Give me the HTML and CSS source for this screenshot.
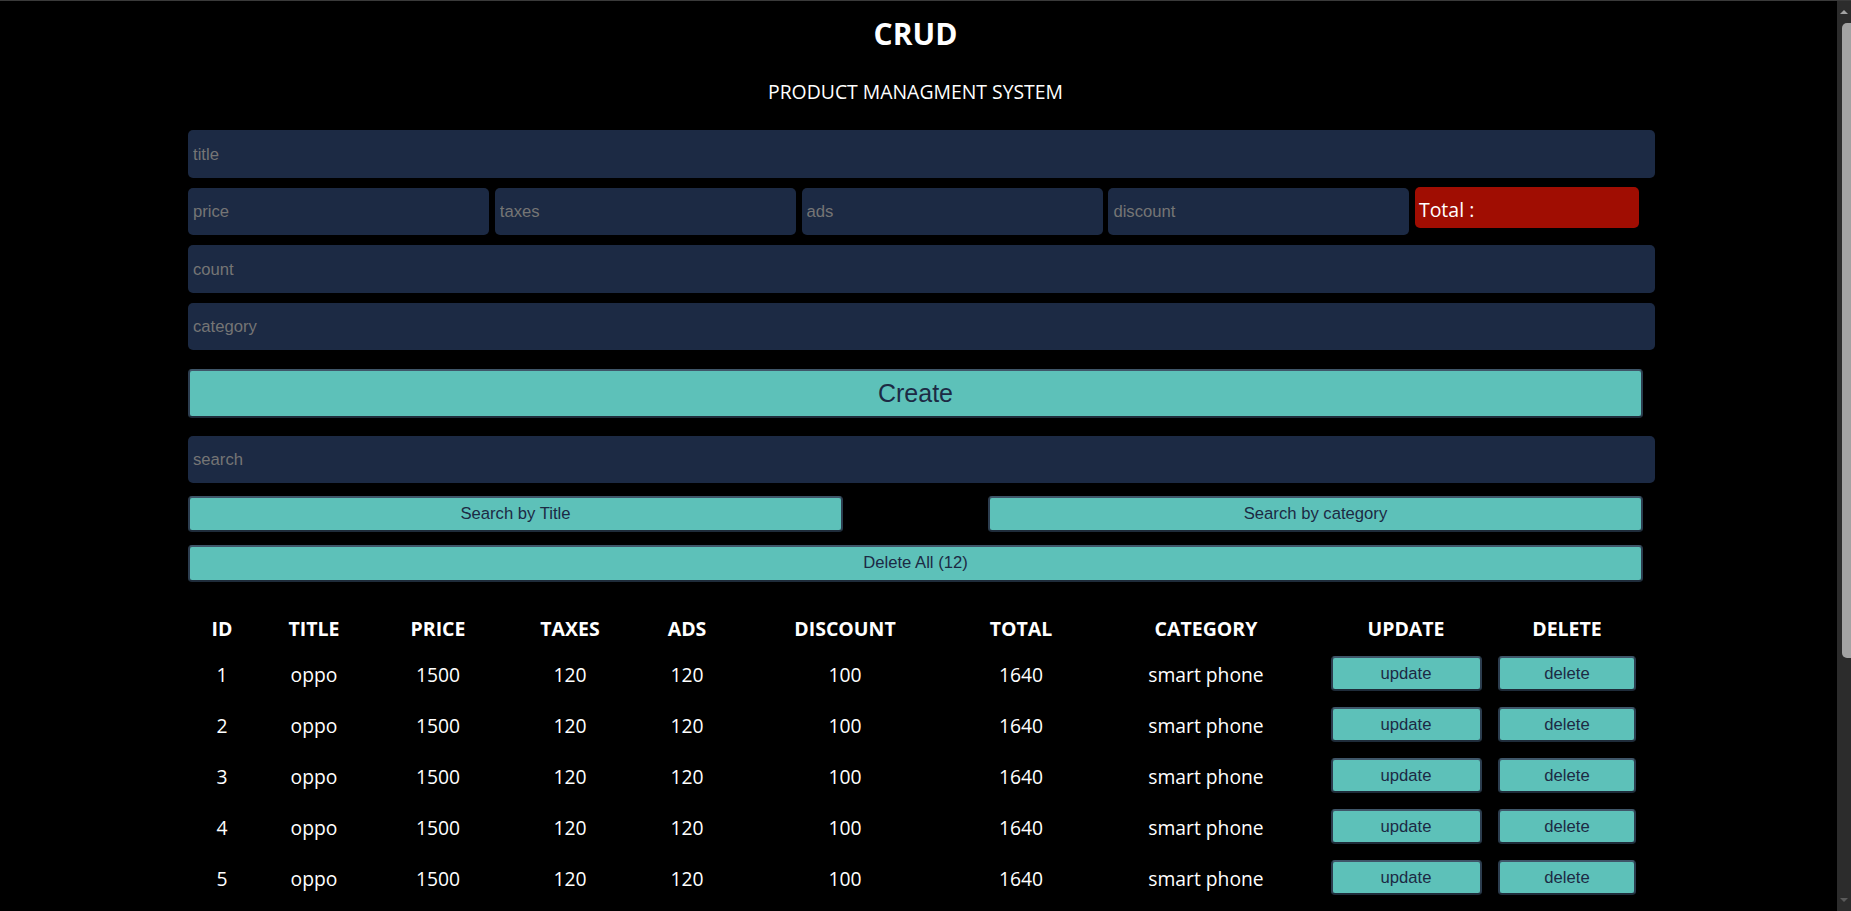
FILE: index.html
```html
<!DOCTYPE html>
<html lang="en">
<head>
<meta charset="UTF-8">
<title>CRUD</title>
<link rel="stylesheet" href="styles.css">
</head>
<body>
<div class="crud">
  <div class="head">
    <h2 class="brand">CRUD</h2>
    <p class="subtitle">PRODUCT MANAGMENT SYSTEM</p>
  </div>
  <div class="inputs">
    <input class="field" type="text" placeholder="title">
    <div class="price">
      <input class="field small" type="text" placeholder="price">
      <input class="field small" type="text" placeholder="taxes">
      <input class="field small" type="text" placeholder="ads">
      <input class="field small" type="text" placeholder="discount">
      <small class="total">Total :</small>
    </div>
    <input class="field" type="text" placeholder="count">
    <input class="field" type="text" placeholder="category">
    <button class="btn create">Create</button>
  </div>
  <div class="search-block">
    <input class="field" type="text" placeholder="search">
    <div class="search-btns">
      <button class="btn half">Search by Title</button>
      <button class="btn half">Search by category</button>
    </div>
  </div>
  <div class="delete-all">
    <button class="btn wide">Delete All (12)</button>
  </div>
  <table class="products">
    <colgroup>
      <col class="c-id"><col class="c-title"><col class="c-price"><col class="c-taxes"><col class="c-ads"><col class="c-discount"><col class="c-total"><col class="c-category"><col class="c-update"><col class="c-delete">
    </colgroup>
    <thead>
      <tr><th>ID</th><th>TITLE</th><th>PRICE</th><th>TAXES</th><th>ADS</th><th>DISCOUNT</th><th>TOTAL</th><th>CATEGORY</th><th>UPDATE</th><th>DELETE</th></tr>
    </thead>
    <tbody>
      <tr><td>1</td><td>oppo</td><td>1500</td><td>120</td><td>120</td><td>100</td><td>1640</td><td>smart phone</td><td><button class="btn row-btn upd">update</button></td><td><button class="btn row-btn del">delete</button></td></tr>
      <tr><td>2</td><td>oppo</td><td>1500</td><td>120</td><td>120</td><td>100</td><td>1640</td><td>smart phone</td><td><button class="btn row-btn upd">update</button></td><td><button class="btn row-btn del">delete</button></td></tr>
      <tr><td>3</td><td>oppo</td><td>1500</td><td>120</td><td>120</td><td>100</td><td>1640</td><td>smart phone</td><td><button class="btn row-btn upd">update</button></td><td><button class="btn row-btn del">delete</button></td></tr>
      <tr><td>4</td><td>oppo</td><td>1500</td><td>120</td><td>120</td><td>100</td><td>1640</td><td>smart phone</td><td><button class="btn row-btn upd">update</button></td><td><button class="btn row-btn del">delete</button></td></tr>
      <tr><td>5</td><td>oppo</td><td>1500</td><td>120</td><td>120</td><td>100</td><td>1640</td><td>smart phone</td><td><button class="btn row-btn upd">update</button></td><td><button class="btn row-btn del">delete</button></td></tr>
      <tr><td>6</td><td>oppo</td><td>1500</td><td>120</td><td>120</td><td>100</td><td>1640</td><td>smart phone</td><td><button class="btn row-btn upd">update</button></td><td><button class="btn row-btn del">delete</button></td></tr>
      <tr><td>7</td><td>oppo</td><td>1500</td><td>120</td><td>120</td><td>100</td><td>1640</td><td>smart phone</td><td><button class="btn row-btn upd">update</button></td><td><button class="btn row-btn del">delete</button></td></tr>
      <tr><td>8</td><td>oppo</td><td>1500</td><td>120</td><td>120</td><td>100</td><td>1640</td><td>smart phone</td><td><button class="btn row-btn upd">update</button></td><td><button class="btn row-btn del">delete</button></td></tr>
      <tr><td>9</td><td>oppo</td><td>1500</td><td>120</td><td>120</td><td>100</td><td>1640</td><td>smart phone</td><td><button class="btn row-btn upd">update</button></td><td><button class="btn row-btn del">delete</button></td></tr>
      <tr><td>10</td><td>oppo</td><td>1500</td><td>120</td><td>120</td><td>100</td><td>1640</td><td>smart phone</td><td><button class="btn row-btn upd">update</button></td><td><button class="btn row-btn del">delete</button></td></tr>
      <tr><td>11</td><td>oppo</td><td>1500</td><td>120</td><td>120</td><td>100</td><td>1640</td><td>smart phone</td><td><button class="btn row-btn upd">update</button></td><td><button class="btn row-btn del">delete</button></td></tr>
      <tr><td>12</td><td>oppo</td><td>1500</td><td>120</td><td>120</td><td>100</td><td>1640</td><td>smart phone</td><td><button class="btn row-btn upd">update</button></td><td><button class="btn row-btn del">delete</button></td></tr>
    </tbody>
  </table>
</div>
<div class="fake-scrollbar" aria-hidden="true">
  <span class="sb-arrow sb-up"></span>
  <span class="sb-thumb"></span>
  <span class="sb-arrow sb-down"></span>
</div>
</body>
</html>
```

FILE: styles.css
```css
:root {
  color-scheme: dark;
}

* {
  box-sizing: border-box;
}

html,
body {
  margin: 0;
  padding: 0;
  background: #000;
}

body {
  border-top: 1px solid #3a3a3a;
  color: #fff;
  font-family: "Open Sans", "Noto Sans", sans-serif;
  padding-bottom: 24px;
}

.crud {
  width: 1455px;
  margin-left: 188px;
  display: flex;
  flex-direction: column;
}

.head {
  text-align: center;
}

.brand {
  margin: 13px 0 0;
  font-size: 30px;
  line-height: 40px;
  font-weight: 700;
}

.subtitle {
  margin: 24px 0 0;
  font-size: 19.4px;
  line-height: 28px;
}

.inputs {
  margin-top: 24px;
  display: flex;
  flex-direction: column;
  gap: 10px;
}

.field {
  box-sizing: content-box;
  width: 100%;
  height: 45.5px;
  padding: 2px 7px 0 5px;
  border: none;
  outline: none;
  border-radius: 5px;
  background: #1c2a44;
  color: #fff;
  font-family: "Liberation Sans", Arial, sans-serif;
  font-size: 16.67px;
}

.field::placeholder {
  color: #757575;
}

.price {
  display: flex;
  align-items: flex-start;
  gap: 5.8px;
}

.field.small {
  box-sizing: border-box;
  width: 301px;
  height: 47.5px;
  flex: none;
  padding: 2px 5px 0;
}

.total {
  flex: none;
  width: 224px;
  height: 41px;
  margin-top: -0.5px;
  margin-left: -0.3px;
  padding: 3px 4px 0;
  display: flex;
  align-items: center;
  border-radius: 5px;
  background: #a00d02;
  color: #fff;
  font-size: 19.5px;
}

.btn {
  border: 2px solid;
  border-color: #3f5669 #2c3d4f #1f2c3a #2c3d4f;
  border-radius: 4px;
  background: #5dc1b9;
  color: #1c2a44;
  font-family: "Liberation Sans", Arial, sans-serif;
  font-size: 16.67px;
  padding: 0;
  cursor: pointer;
}

.create {
  margin-top: 8.5px;
  width: 100%;
  height: 49px;
  font-size: 25px;
}

.search-block {
  margin-top: 18px;
  display: flex;
  flex-direction: column;
}

.search-btns {
  margin-top: 12.5px;
  display: flex;
  justify-content: space-between;
}

.half {
  width: 655px;
  height: 36px;
}

.delete-all {
  margin-top: 13px;
}

.wide {
  width: 100%;
  height: 37px;
}

.products {
  margin-top: 27.5px;
  width: 1456px;
  border-collapse: collapse;
  table-layout: fixed;
}

.c-id { width: 68px; }
.c-title { width: 116px; }
.c-price { width: 132px; }
.c-taxes { width: 132px; }
.c-ads { width: 102px; }
.c-discount { width: 214px; }
.c-total { width: 138px; }
.c-category { width: 232px; }
.c-update { width: 168px; }
.c-delete { width: 154px; }

.products th {
  height: 39.5px;
  padding: 0;
  font-size: 19.5px;
  font-weight: 700;
  text-align: center;
  vertical-align: middle;
}

.products td {
  height: 51px;
  padding: 0;
  font-size: 19.3px;
  text-align: center;
  vertical-align: middle;
}

.row-btn {
  height: 35px;
  display: block;
  margin: -1px auto 0;
}

.upd {
  width: 151px;
}

.del {
  width: 138px;
}

.fake-scrollbar {
  position: fixed;
  top: 1px;
  right: 0;
  bottom: 0;
  width: 14px;
  background: #2c2c2c;
  display: flex;
  flex-direction: column;
  align-items: flex-end;
}

.sb-arrow {
  width: 0;
  height: 0;
  margin: 9px 3px 6px 0;
  border-left: 4px solid transparent;
  border-right: 4px solid transparent;
}

.sb-up {
  border-bottom: 4px solid #a3a3a3;
}

.sb-down {
  margin: auto 3px 9px 0;
  border-top: 4px solid #5a5a5a;
}

.sb-thumb {
  width: 9px;
  height: 635px;
  margin-top: 3px;
  border-radius: 5px 0 0 5px;
  background: #a3a3a3;
}
```
